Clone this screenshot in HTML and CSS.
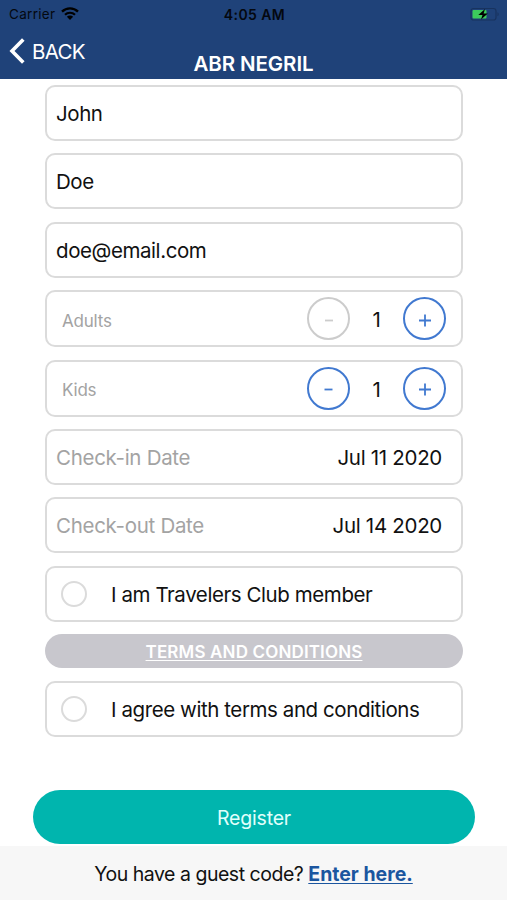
FILE: index.html
```html
<!DOCTYPE html>
<html lang="en">
<head>
    <meta charset="UTF-8">
    <meta name="viewport" content="width=device-width, initial-scale=1.0">
    <title>ABR Negril</title>
    <link rel="stylesheet" href="styles.css">
</head>
<body>
    <header class="header">
        <div class="status-bar">
            <div class="carrier">
                <span>Carrier</span>
                <svg class="wifi" viewBox="0 0 18 13" width="18" height="13">
                    <path d="M1 4.6a11.5 11.5 0 0 1 16 0" fill="none" stroke="#000" stroke-width="2.4"/>
                    <path d="M4 7.8a7.1 7.1 0 0 1 10 0" fill="none" stroke="#000" stroke-width="2.2"/>
                    <path d="M9 13L5.9 9.8a4.4 4.4 0 0 1 6.2 0z"/>
                </svg>
            </div>
            <span class="time">4:05 AM</span>
            <svg class="battery" viewBox="0 0 30 14" width="30" height="14">
                <rect x="1" y="1.5" width="25" height="11.5" rx="2.5" fill="none" stroke="#18335f" stroke-width="1.2"/>
                <path d="M27.5 5.3c1.6.5 1.6 3.4 0 3.9z" fill="#18335f"/>
                <rect x="2.5" y="3" width="14" height="8.5" rx="1" fill="#3ccb5c"/>
                <path d="M15 2L8.3 8h4.2l-1.5 4.5L17.8 6.6h-4.2z"/>
            </svg>
        </div>
        <a href="#" class="back">
            <svg viewBox="0 0 16 26" width="16" height="26"><path d="M14.3 1.5L3 13l11.3 11.5" fill="none" stroke="#fff" stroke-width="3.6"/></svg>
            <span>BACK</span>
        </a>
        <h1 class="title">ABR NEGRIL</h1>
    </header>

    <main class="form">
        <input class="field" type="text" value="John" aria-label="First name">
        <input class="field" type="text" value="Doe" aria-label="Last name">
        <input class="field" type="text" value="doe@email.com" aria-label="Email">

        <div class="field counter">
            <span class="counter-label">Adults</span>
            <button class="round-btn disabled"><svg viewBox="0 0 12 12" width="12" height="12"><path d="M2 6.5h8"/></svg></button>
            <span class="count">1</span>
            <button class="round-btn"><svg viewBox="0 0 12 12" width="12" height="12"><path d="M0 6.5h12M6 .5v12"/></svg></button>
        </div>
        <div class="field counter">
            <span class="counter-label">Kids</span>
            <button class="round-btn minus"><svg viewBox="0 0 12 12" width="12" height="12"><path d="M1.5 6.5h8"/></svg></button>
            <span class="count">1</span>
            <button class="round-btn"><svg viewBox="0 0 12 12" width="12" height="12"><path d="M0 6.5h12M6 .5v12"/></svg></button>
        </div>

        <div class="field date">
            <span class="placeholder">Check-in Date</span>
            <span class="value">Jul 11 2020</span>
        </div>
        <div class="field date">
            <span class="placeholder">Check-out Date</span>
            <span class="value">Jul 14 2020</span>
        </div>

        <label class="field check">
            <input type="checkbox">
            <span>I am Travelers Club member</span>
        </label>
        <a href="#" class="terms">TERMS AND CONDITIONS</a>
        <label class="field check">
            <input type="checkbox">
            <span>I agree with terms and conditions</span>
        </label>
    </main>

    <button class="register">Register</button>

    <footer class="footer">
        <span>You have a guest code?</span>
        <a href="#">Enter here.</a>
    </footer>
</body>
</html>
```
FILE: styles.css
```css
:root {
    --navy: #1f4279;
    --blue: #4179d0;
    --teal: #00b5ae;
    --line: #dbdbdb;
}
* { box-sizing: border-box; }
body {
    margin: 0;
    height: 900px;
    display: flex;
    flex-direction: column;
    font-family: Inter, "Liberation Sans", sans-serif;
    font-size: 20.5px;
    letter-spacing: -0.42px;
    color: #111;
    background: #fff;
    overflow: hidden;
}
button { font: inherit; letter-spacing: inherit; padding: 0; }

.header {
    height: 79px;
    flex: none;
    background: var(--navy);
    color: #fff;
    display: grid;
    grid-template-columns: 1fr auto 1fr;
    grid-template-rows: 27px 52px;
}
.status-bar {
    grid-column: 1 / -1;
    display: grid;
    grid-template-columns: 1fr auto 1fr;
    align-items: center;
    padding: 1px 7px 0 9px;
    color: #04080f;
    font-size: 13.5px;
    letter-spacing: 0.3px;
}
.carrier { display: flex; align-items: center; gap: 6px; }
.wifi { margin-top: -2px; }
.time { font-size: 14px; font-weight: 600; letter-spacing: 0.4px; }
.battery { justify-self: end; margin-top: -1px; }
.back {
    display: flex;
    align-items: center;
    align-self: start;
    gap: 7px;
    padding: 11px 0 0 9px;
    color: #fff;
    text-decoration: none;
    letter-spacing: -0.7px;
}
.title {
    margin: 0;
    padding-top: 25px;
    font-size: 20.5px;
    line-height: 24px;
    font-weight: 600;
    letter-spacing: -0.1px;
}

.form {
    display: flex;
    flex-direction: column;
    gap: 12.4px;
    padding: 6px 44px 0 45px;
}
.field {
    width: 100%;
    height: 56px;
    flex: none;
    display: flex;
    align-items: center;
    padding: 1px 9px 0;
    border: 2px solid var(--line);
    border-radius: 10px;
    background: #fff;
    color: #111;
    font: inherit;
    letter-spacing: inherit;
}
.counter { height: 57px; padding: 0 15px; }
.counter-label { flex: 1; font-size: 17px; letter-spacing: -0.2px; color: #a3a3a3; padding-top: 4px; }
.count { width: 53px; text-align: center; padding-top: 2px; }
.round-btn {
    width: 43px;
    height: 43px;
    display: flex;
    align-items: center;
    justify-content: center;
    border: 2.5px solid var(--blue);
    border-radius: 50%;
    background: #fff;
    color: var(--blue);
}
.round-btn svg { fill: none; stroke: currentColor; stroke-width: 1.8; margin-top: 2px; overflow: visible; }
.round-btn.disabled { color: #ccc; border-color: #ccc; }
.date { justify-content: space-between; padding: 1px 19px 0 9px; }
.placeholder { color: #a3a3a3; letter-spacing: -0.3px; }
.value { letter-spacing: -0.3px; }

.check { gap: 24px; padding: 1px 14px 0; }
.check input {
    appearance: none;
    width: 26px;
    height: 26px;
    margin: 0;
    border: 2px solid var(--line);
    border-radius: 50%;
}
.terms {
    height: 34px;
    display: flex;
    align-items: center;
    justify-content: center;
    padding-top: 1px;
    border-radius: 17px;
    background: #c8c7cd;
    color: #fff;
    font-size: 17px;
    font-weight: 600;
    letter-spacing: 0.15px;
    text-underline-offset: 2px;
}

.register {
    height: 54px;
    flex: none;
    margin: auto 32px 2px 33px;
    padding-top: 1px;
    border: 0;
    border-radius: 27px;
    background: var(--teal);
    color: #e0fffb;
    font-size: 19.5px;
    letter-spacing: -0.2px;
}
.footer {
    height: 54px;
    flex: none;
    display: flex;
    align-items: center;
    justify-content: center;
    gap: 5px;
    padding-top: 2px;
    background: #f7f7f7;
    font-size: 19.5px;
    letter-spacing: -0.48px;
}
.footer a { color: #1b569f; font-weight: 700; letter-spacing: 0; text-underline-offset: 2px; }
```
